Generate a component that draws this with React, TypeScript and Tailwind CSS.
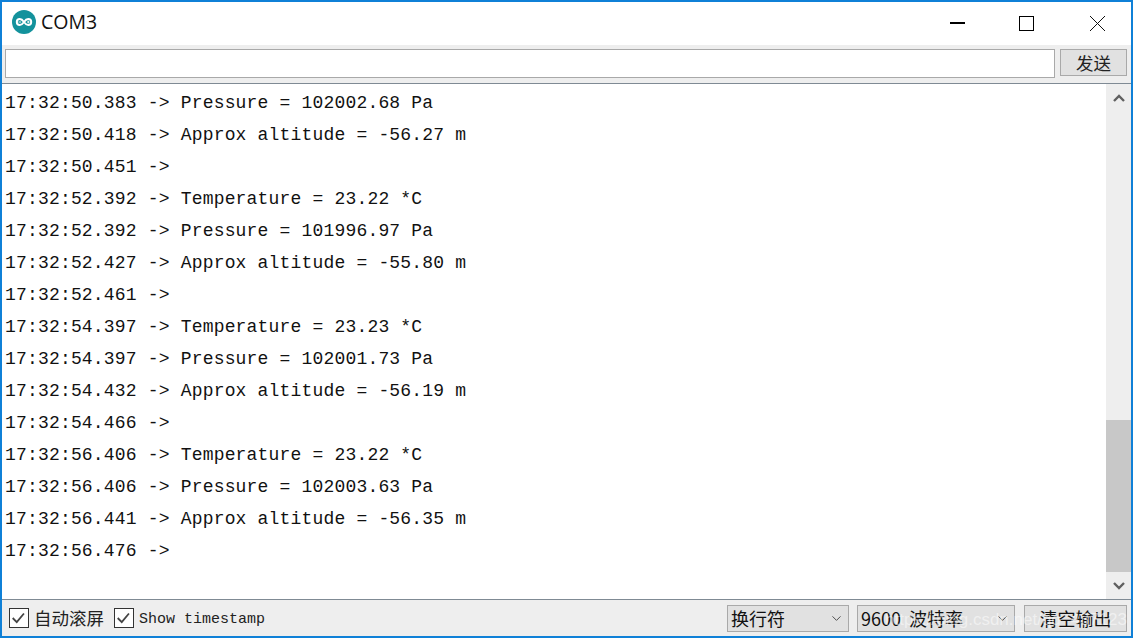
import { ChevronDown } from "lucide-react";

const mono = "font-['Liberation_Mono','Noto_Sans_CJK_SC',monospace]";

const lines = [
    "17:32:50.383 -> Pressure = 102002.68 Pa",
    "17:32:50.418 -> Approx altitude = -56.27 m",
    "17:32:50.451 -> ",
    "17:32:52.392 -> Temperature = 23.22 *C",
    "17:32:52.392 -> Pressure = 101996.97 Pa",
    "17:32:52.427 -> Approx altitude = -55.80 m",
    "17:32:52.461 -> ",
    "17:32:54.397 -> Temperature = 23.23 *C",
    "17:32:54.397 -> Pressure = 102001.73 Pa",
    "17:32:54.432 -> Approx altitude = -56.19 m",
    "17:32:54.466 -> ",
    "17:32:56.406 -> Temperature = 23.22 *C",
    "17:32:56.406 -> Pressure = 102003.63 Pa",
    "17:32:56.441 -> Approx altitude = -56.35 m",
    "17:32:56.476 -> ",
];

function CheckBox({ label, className }: { label: string; className: string }) {
    return (
        <div className="flex items-center gap-[5px]">
            <div className="flex h-[20px] w-[20px] items-center justify-center border border-[#333333] bg-white">
                <svg viewBox="0 0 20 20" className="h-[18px] w-[18px]" fill="none" stroke="#444444" strokeWidth="2">
                    <path d="M3 10l4.5 4.5L15.5 5" />
                </svg>
            </div>
            <span className={className}>{label}</span>
        </div>
    );
}

function Select({ label, className }: { label: string; className: string }) {
    return (
        <div className={`flex h-[27px] items-center justify-between border border-[#a9a9a9] bg-[#e1e1e1] pl-[3px] pr-[4px] ${className}`}>
            <span className="whitespace-pre font-['Noto_Sans_CJK_SC',sans-serif] text-[18px] leading-none text-[#111111]">
                {label}
            </span>
            <ChevronDown size={15} strokeWidth={1.5} className="text-[#444444]" />
        </div>
    );
}

export default function App() {
    return (
        <div className="relative flex h-[638px] w-[1133px] flex-col border-2 border-[#0f80d7] bg-white">
            {/* title bar */}
            <div className="flex h-[43px] shrink-0 items-center bg-white pb-[3px] pl-[10px]">
                <svg viewBox="0 0 24 24" className="h-[24px] w-[24px] shrink-0">
                    <circle cx="12" cy="12" r="12" fill="#13929c" />
                    <g fill="none" stroke="white" strokeWidth="2">
                        <path d="M12 12c-1.4-2-2.6-3-4.2-3a3 3 0 0 0 0 6c1.6 0 2.8-1 4.2-3c1.4-2 2.6-3 4.2-3a3 3 0 0 1 0 6c-1.6 0-2.8-1-4.2-3z" />
                    </g>
                    <path d="M6.5 12h2.6M15 12h2.6M16.3 10.7v2.6" stroke="white" strokeWidth="0.9" />
                </svg>
                <span className="ml-[5px] font-['Open_Sans',sans-serif] text-[19.5px] leading-none text-[#111111]">COM3</span>
                <div className="ml-auto flex items-center pt-[2px]">
                    <div className="h-[1.5px] w-[15px] bg-black" />
                    <div className="ml-[54px] h-[15px] w-[15px] border-[1.5px] border-black" />
                    <svg viewBox="0 0 15 15" className="ml-[56px] mr-[26px] h-[15px] w-[15px]" fill="none" stroke="#111111" strokeWidth="1">
                        <path d="M0 0l15 15M15 0L0 15" />
                    </svg>
                </div>
            </div>

            {/* send bar */}
            <div className="flex h-[38px] shrink-0 items-start gap-[5px] bg-[#eeeeee] pl-[3px] pr-[4px] pt-[4px]">
                <div className="h-[29px] flex-1 border border-[#a9a9a9] bg-white" />
                <div className="flex h-[27px] w-[67px] items-center justify-center border border-[#a9a9a9] bg-[#e1e1e1] font-['Noto_Sans_CJK_SC',sans-serif] text-[17.5px] leading-none text-[#222222]">
                    发送
                </div>
            </div>

            {/* output */}
            <div className="flex min-h-0 flex-1 border-y border-[#7f8a94]">
                <div className={`flex-1 overflow-hidden bg-white pl-[3px] pt-[3px] text-[18px] leading-[32px] tracking-[0.18px] text-[#111111] ${mono}`}>
                    {lines.map((line, i) => (
                        <div key={i} className="h-[32px] whitespace-pre">
                            {line}
                        </div>
                    ))}
                </div>
                <div className="flex w-[25px] shrink-0 flex-col items-center bg-[#eeeeee]">
                    <div className="flex h-[28px] w-full items-center justify-center">
                        <svg viewBox="0 0 12 8" className="h-[8px] w-[12px]" fill="none" stroke="#606060" strokeWidth="2.4">
                            <path d="M1 7l5-5 5 5" />
                        </svg>
                    </div>
                    <div className="flex-1" />
                    <div className="h-[152px] w-full bg-[#c8c8c8]" />
                    <div className="flex h-[27px] w-full items-center justify-center">
                        <svg viewBox="0 0 12 8" className="h-[8px] w-[12px]" fill="none" stroke="#606060" strokeWidth="2.4">
                            <path d="M1 1l5 5 5-5" />
                        </svg>
                    </div>
                </div>
            </div>

            {/* status bar */}
            <div className="flex h-[36px] shrink-0 items-center bg-[#eeeeee] pl-[7px] pr-[4px]">
                <CheckBox label="自动滚屏" className="font-['Noto_Sans_CJK_SC',sans-serif] text-[17.5px] leading-none text-[#222222]" />
                <div className="w-[10px]" />
                <CheckBox label="Show timestamp" className={`pt-[2px] text-[15px] leading-none text-[#222222] ${mono}`} />
                <div className="ml-auto flex items-center">
                    <Select label="换行符" className="mr-[8px] w-[122px]" />
                    <Select label="9600  波特率" className="mr-[9px] w-[158px]" />
                    <div className="flex h-[27px] w-[103px] items-center justify-center border border-[#a9a9a9] bg-[#e1e1e1] font-['Noto_Sans_CJK_SC',sans-serif] text-[18px] leading-none text-[#111111]">
                        清空输出
                    </div>
                </div>
            </div>

            {/* csdn watermark */}
            <div className="absolute bottom-[8px] right-[4px] whitespace-nowrap font-['Liberation_Sans',sans-serif] text-[17px] leading-none text-white/50">
                https://blog.csdn.net/qq_437123
            </div>
        </div>
    );
}
